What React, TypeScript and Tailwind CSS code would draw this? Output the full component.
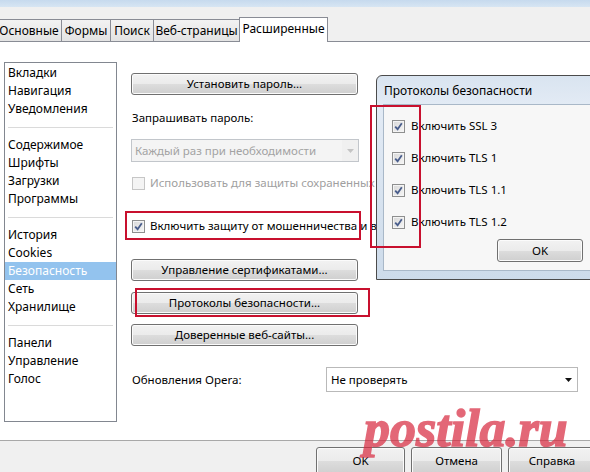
import type { ReactNode } from "react";

const sidebarGroups: string[][] = [
  ["Вкладки", "Навигация", "Уведомления"],
  ["Содержимое", "Шрифты", "Загрузки", "Программы"],
  ["История", "Cookies", "Безопасность", "Сеть", "Хранилище"],
  ["Панели", "Управление", "Голос"],
];

const tabs = [
  { label: "Основные", w: "w-[65px]" },
  { label: "Формы", w: "w-[49px]" },
  { label: "Поиск", w: "w-[43px]" },
  { label: "Веб-страницы", w: "w-[86px]" },
];

const protocols = ["Включить SSL 3", "Включить TLS 1", "Включить TLS 1.1", "Включить TLS 1.2"];

function CheckBox({ checked, disabled }: { checked?: boolean; disabled?: boolean }) {
  return (
    <span
      className={`flex h-[13px] w-[13px] shrink-0 items-center justify-center border ${
        disabled
          ? "border-[#c6c6c6] bg-[#f4f4f4]"
          : "border-[#8e8f8f] bg-[linear-gradient(135deg,#d8d8d8,#f6f6f6)] shadow-[inset_0_0_0_1px_#f4f4f4]"
      }`}
    >
      {checked && (
        <svg width="9" height="9" viewBox="0 0 9 9">
          <path d="M1.2 4.6 L3.6 7.2 L7.8 1.2" fill="none" stroke="#4a5e8c" strokeWidth="1.8" />
        </svg>
      )}
    </span>
  );
}

function WinButton({ children, className = "" }: { children: ReactNode; className?: string }) {
  return (
    <div
      className={`flex items-center justify-center rounded-[3px] border border-[#707070] bg-[linear-gradient(#f2f2f2,#ebebeb_50%,#dddddd_50%,#cfcfcf)] shadow-[inset_0_0_0_1px_#fbfbfb] ${className}`}
    >
      {children}
    </div>
  );
}

function Arrow({ color }: { color: string }) {
  return (
    <svg width="7" height="4" viewBox="0 0 7 4">
      <path d="M0 0 H7 L3.5 4 Z" fill={color} />
    </svg>
  );
}

export default function App() {
  return (
    <div className="relative h-[472px] w-[590px] overflow-hidden bg-[#f0f0f0] font-['Noto_Sans',sans-serif] text-[11.5px] leading-[18px] text-black">
      {/* window caption strip */}
      <div className="h-[7px] bg-[linear-gradient(#c6daee,#d7e5f3)]" />
      <div className="h-[10px]" />

      {/* tab row */}
      <div className="flex h-[25px] items-end">
        <div className="-ml-[4px] flex items-end">
          {tabs.map((t) => (
            <div
              key={t.label}
              className={`${t.w} flex h-[23px] items-center justify-center border-b border-l border-t border-[#898c95] bg-[linear-gradient(#f2f2f2,#e3e3e3)] text-[12px]`}
            >
              {t.label}
            </div>
          ))}
          <div className="flex h-[25px] w-[89px] items-center justify-center border-x border-t border-[#898c95] bg-white pb-[2px] text-[12px]">
            Расширенные
          </div>
        </div>
        <div className="h-px flex-1 bg-[#898c95]" />
      </div>

      {/* page body */}
      <div className="flex h-[398px] gap-[14px] bg-white pl-[4px]">
        <div className="mt-[20px] h-[360px] w-[113px] shrink-0 border border-[#828790] pt-[1px] text-[12px]">
          {sidebarGroups.map((group, gi) => (
            <div key={gi}>
              {gi > 0 && (
                <div className="flex h-[18px] items-center px-[3px]">
                  <div className="h-px w-full bg-[#dadada]" />
                </div>
              )}
              {group.map((item) => (
                <div
                  key={item}
                  className={`h-[18px] pl-[3px] ${item === "Безопасность" ? "bg-[#93c3ee] text-white" : ""}`}
                >
                  {item}
                </div>
              ))}
            </div>
          ))}
        </div>

        <div className="flex min-w-0 flex-1 flex-col pt-[31px]">
          <WinButton className="h-[22px] w-[227px]">Установить пароль...</WinButton>
          <div className="mt-[14px] pl-[1px]">Запрашивать пароль:</div>
          <div className="mt-[12px] flex h-[23px] w-[228px] items-center border border-[#c2c6cb] bg-[#f4f4f4] text-[#a3a3a3]">
            <span className="flex-1 pl-[3px]">Каждый раз при необходимости</span>
            <span className="flex h-full w-[16px] items-center justify-center bg-[#f0f0f0]">
              <Arrow color="#c4c4c4" />
            </span>
          </div>
          <div className="mt-[12px] flex items-center gap-[5px] whitespace-nowrap pl-[1px] text-[#a0a0a0]">
            <CheckBox disabled />
            Использовать для защиты сохраненных паролей
          </div>
          <div className="mt-[25px] flex items-center gap-[5px] whitespace-nowrap pl-[1px]">
            <CheckBox checked />
            Включить защиту от мошенничества и вредоносных программ
          </div>
          <WinButton className="mt-[24px] h-[22px] w-[227px]">Управление сертификатами...</WinButton>
          <WinButton className="mt-[11px] h-[22px] w-[227px]">Протоколы безопасности...</WinButton>
          <WinButton className="mt-[10px] h-[22px] w-[227px]">Доверенные веб-сайты...</WinButton>
          <div className="mt-[21px] flex items-center">
            <span className="w-[195px] pl-[1px]">Обновления Opera:</span>
            <div className="flex h-[25px] w-[252px] items-center border border-[#b9b9b9] bg-white">
              <span className="flex-1 pl-[4px]">Не проверять</span>
              <span className="pr-[5px]">
                <Arrow color="#111" />
              </span>
            </div>
          </div>
        </div>
      </div>

      {/* dialog buttons */}
      <div className="flex h-[32px] gap-[6px] border-t border-[#a8a8a8] pl-[316px] pt-[6px]">
        <WinButton className="h-[28px] w-[89px] shrink-0">OK</WinButton>
        <WinButton className="h-[28px] w-[91px] shrink-0">Отмена</WinButton>
        <WinButton className="h-[28px] w-[88px] shrink-0">Справка</WinButton>
      </div>

      {/* security protocols window */}
      <div className="absolute left-[376px] top-[75px] flex h-[205px] w-[230px] flex-col rounded-tl-[6px] border border-[#4b4b4b] bg-[linear-gradient(#d9e4f0,#e3ebf5_30px,#cddbea)] pb-[8px] pl-[6px]">
        <div className="flex h-[28px] items-center pl-[1px] pt-[2px] text-[12px]">Протоколы безопасности</div>
        <div className="flex flex-1 flex-col border border-[#a9b8c8] bg-[#f7f7f7] pl-[8px] pt-[12px]">
          {protocols.map((p) => (
            <div key={p} className="mb-[14px] flex h-[18px] items-center gap-[6px]">
              <CheckBox checked />
              {p}
            </div>
          ))}
          <WinButton className="-mt-[6px] ml-[105px] h-[23px] w-[86px]">OK</WinButton>
        </div>
      </div>

      {/* red markers */}
      <div className="absolute left-[125px] top-[211px] h-[29px] w-[236px] border-2 border-[#c8102e]" />
      <div className="absolute left-[135px] top-[288px] h-[29px] w-[235px] border-2 border-[#c8102e]" />
      <div className="absolute left-[370px] top-[105px] h-[143px] w-[51px] border-2 border-[#c8102e]" />

      {/* watermark */}
      <div className="absolute left-[364px] top-[403px] font-['Liberation_Serif',serif] text-[52px] font-bold italic leading-none text-[#d8283e] opacity-70 [-webkit-text-stroke:1.5px_#d8283e]">
        postila.ru
      </div>
    </div>
  );
}
